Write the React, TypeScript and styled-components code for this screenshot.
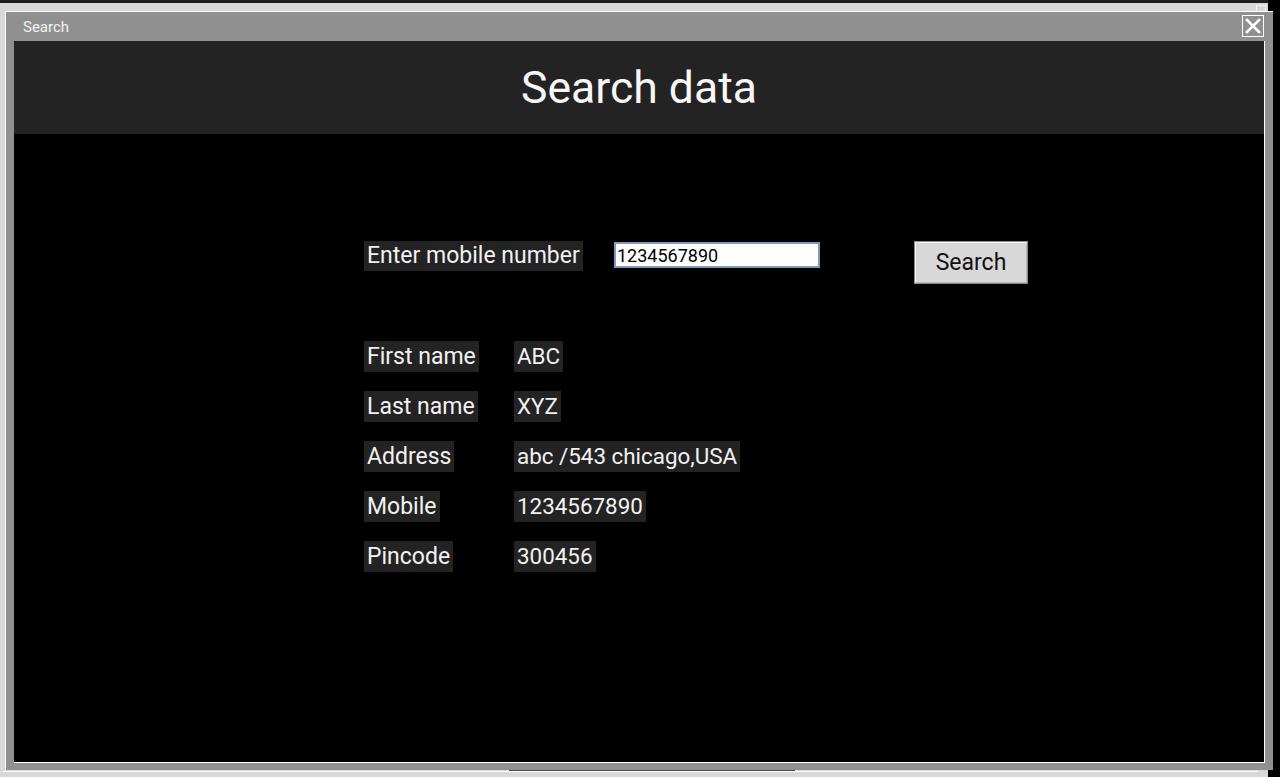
import React from "react";
import styled, { createGlobalStyle } from "styled-components";

const Global = createGlobalStyle`
  html, body { margin: 0; padding: 0; background: #000; }
  body { font-family: Roboto, "Liberation Sans", sans-serif; }
`;

const Desktop = styled.div`
  position: relative;
  width: 1280px;
  height: 777px;
  overflow: hidden;
  background: #000;
`;

const BackWindow = styled.div`
  position: absolute;
  left: 0;
  top: 0;
  width: 1268px;
  height: 777px;
  box-sizing: border-box;
  border-top: 3px solid #1e1e1e;
  background: #d8d8d8;
`;

const BackClose = styled.div`
  position: absolute;
  right: 2px;
  top: 2px;
  width: 8px;
  height: 8px;
  border: 1px solid #f4f4f4;
`;

const BackEdge = styled.div`
  position: absolute;
  left: 3px;
  right: 10px;
  bottom: 5px;
  height: 1px;
  background: #ffffff;
`;

const BackShadow = styled.div`
  position: absolute;
  left: 509px;
  width: 286px;
  bottom: 6px;
  height: 1px;
  background: #4a4a4a;
`;

const Window = styled.div`
  position: absolute;
  left: 5px;
  top: 11px;
  width: 1268px;
  height: 759px;
  box-sizing: border-box;
  border-top: 1px solid #ffffff;
  border-left: 1px solid #ffffff;
  background: #909090;
  display: flex;
  flex-direction: column;
  padding: 0 8px 7px 8px;
`;

const TitleBar = styled.div`
  height: 29px;
  display: flex;
  align-items: flex-start;
  justify-content: space-between;
  padding-left: 9px;
`;

const TitleText = styled.span`
  color: #f2f2f2;
  font-size: 15px;
  line-height: 30px;
  font-family: Roboto, "Liberation Sans", sans-serif;
`;

const CloseButton = styled.div`
  width: 20px;
  height: 20px;
  border: 1px solid #ffffff;
  display: flex;
  align-items: center;
  justify-content: center;
  margin-top: 3px;
  margin-right: 1px;
`;

const Content = styled.div`
  flex: 1;
  display: flex;
  flex-direction: column;
  background: #000;
  border-right: 1px solid #ffffff;
  border-bottom: 1px solid #ffffff;
`;

const Header = styled.div`
  height: 93px;
  background: #232323;
  display: flex;
  align-items: center;
  justify-content: center;
`;

const HeaderTitle = styled.h1`
  margin: 0;
  font-family: Roboto, "Liberation Sans", sans-serif;
  font-weight: 400;
  font-size: 44.5px;
  color: #f7f7f7;
`;

const Body = styled.div`
  padding: 107px 0 0 350px;
  display: flex;
  flex-direction: column;
`;

const SearchRow = styled.div`
  display: grid;
  grid-template-columns: 250px 300px auto;
  align-items: start;
`;

const Label = styled.span<{ $h?: number; $size?: number }>`
  justify-self: start;
  background: #232323;
  color: #f2f2f2;
  font-size: ${(p) => p.$size ?? 23}px;
  line-height: ${(p) => p.$h ?? 31}px;
  height: ${(p) => p.$h ?? 31}px;
  padding: 0 3px 0 3px;
  white-space: nowrap;
`;

const Input = styled.input`
  width: 206px;
  height: 26px;
  margin-top: 1px;
  box-sizing: border-box;
  border: 2px solid #7f9bb9;
  background: #fff;
  color: #000;
  font-family: Roboto, "Liberation Sans", sans-serif;
  font-size: 18px;
  padding: 0 1px;
  outline: none;
`;

const Button = styled.button`
  width: 114px;
  height: 43px;
  box-sizing: border-box;
  background: #d8d8d8;
  border: 1px solid #8c8c8c;
  box-shadow: inset 1px 1px 0 #f4f4f4, inset -1px -1px 0 #b8b8b8;
  color: #111;
  font-family: Roboto, "Liberation Sans", sans-serif;
  font-size: 23px;
  padding: 0;
`;

const DetailGrid = styled.div`
  margin-top: 57px;
  display: grid;
  grid-template-columns: 150px auto;
  row-gap: 19px;
  justify-items: start;
`;

const rows: [string, string][] = [
  ["First name", "ABC"],
  ["Last name", "XYZ"],
  ["Address", "abc /543 chicago,USA"],
  ["Mobile", "1234567890"],
  ["Pincode", "300456"],
];

export default function App() {
  return (
    <>
      <Global />
      <Desktop>
        <BackWindow>
          <BackClose />
          <BackShadow />
          <BackEdge />
        </BackWindow>
        <Window>
          <TitleBar>
            <TitleText>Search</TitleText>
            <CloseButton>
              <svg width="16" height="16" viewBox="0 0 16 16">
                <path d="M2 2 L14 14 M14 2 L2 14" stroke="#fff" strokeWidth="2.6" strokeLinecap="square" />
              </svg>
            </CloseButton>
          </TitleBar>
          <Content>
            <Header>
              <HeaderTitle>Search data</HeaderTitle>
            </Header>
            <Body>
              <SearchRow>
                <Label $h={30}>Enter mobile number</Label>
                <Input defaultValue="1234567890" />
                <Button>Search</Button>
              </SearchRow>
              <DetailGrid>
                {rows.map(([k, v]) => (
                  <React.Fragment key={k}>
                    <Label>{k}</Label>
                    <Label $size={22.4}>{v}</Label>
                  </React.Fragment>
                ))}
              </DetailGrid>
            </Body>
          </Content>
        </Window>
      </Desktop>
    </>
  );
}
